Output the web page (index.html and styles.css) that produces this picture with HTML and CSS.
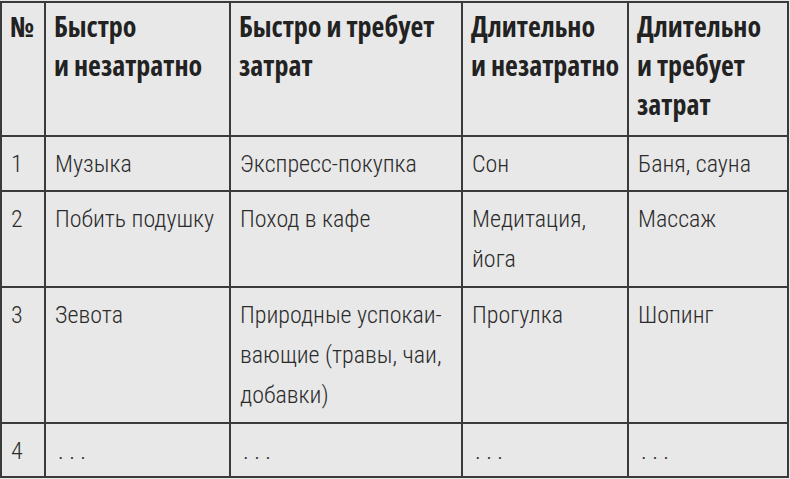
FILE: index.html
```html
<!DOCTYPE html>
<html lang="ru">
<head>
<meta charset="utf-8">
<link rel="stylesheet" href="styles.css">
</head>
<body>
<div class="grid">
  <div class="cell head">№</div>
  <div class="cell head">Быстро<br>и незатратно</div>
  <div class="cell head">Быстро и требует<br>затрат</div>
  <div class="cell head">Длительно<br>и незатратно</div>
  <div class="cell head">Длительно<br>и требует<br>затрат</div>

  <div class="cell">1</div>
  <div class="cell">Музыка</div>
  <div class="cell">Экспресс-покупка</div>
  <div class="cell">Сон</div>
  <div class="cell">Баня, сауна</div>

  <div class="cell">2</div>
  <div class="cell">Побить подушку</div>
  <div class="cell">Поход в кафе</div>
  <div class="cell">Медитация,<br>йога</div>
  <div class="cell">Массаж</div>

  <div class="cell">3</div>
  <div class="cell">Зевота</div>
  <div class="cell">Природные успокаи-<br>вающие (травы, чаи,<br>добавки)</div>
  <div class="cell">Прогулка</div>
  <div class="cell">Шопинг</div>

  <div class="cell">4</div>
  <div class="cell dots">. . .</div>
  <div class="cell dots">. . .</div>
  <div class="cell dots">. . .</div>
  <div class="cell dots">. . .</div>
</div>
</body>
</html>
```
FILE: styles.css
```css
html, body {
  margin: 0;
  padding: 0;
  background: #e8e8e8;
}
body {
  padding-top: 1px;
}
.grid {
  display: grid;
  grid-template-columns: 42px 183px 230px 164px 158px;
  grid-template-rows: 132px 53px 94px 134px 52px;
  gap: 2px;
  padding: 2px;
  width: max-content;
  background: #3a3a3a;
}
.cell {
  background: #e8e8e8;
  color: #2b2b2b;
  padding: 7px 0 0 9px;
  font-family: "Roboto Condensed", "Open Sans", sans-serif;
  font-weight: 300;
  font-size: 24px;
  line-height: 40px;
  white-space: nowrap;
}
.head {
  padding-top: 4px;
  padding-left: 8px;
  font-family: "Open Sans", sans-serif;
  font-stretch: 75%;
  font-weight: 700;
  font-size: 28px;
  line-height: 39px;
  color: #222;
}
.dots {
  padding-left: 12px;
}
```
